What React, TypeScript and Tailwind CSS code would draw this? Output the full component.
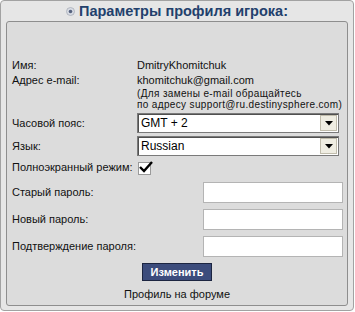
import React from "react";

const font = { fontFamily: '"Liberation Sans", Arial, sans-serif' };

function FakeSelect({ value }: { value: string }) {
  return (
    <div className="flex h-[20px] w-[202px] items-stretch border border-[#7a7a7a] bg-white shadow-[inset_1px_1px_0_#505050]">
      <div className="flex-1 pl-[3px] text-[12px] leading-[18px] text-black">{value}</div>
      <div className="m-[1px] flex w-[17px] items-center justify-center border border-[#c0bcac] bg-[#efede2]">
        <svg width="8" height="5" viewBox="0 0 8 5">
          <polygon points="0,0 8,0 4,4.5" fill="#000" />
        </svg>
      </div>
    </div>
  );
}

function PwRow({ label }: { label: string }) {
  return (
    <div className="flex h-[21px] items-center">
      <div className="flex-1 pl-[5px] text-[11px] text-[#111]">{label}</div>
      <div className="mr-[4px] h-[21px] w-[140px] border border-[#b4b4b4] bg-white" />
    </div>
  );
}

export default function App() {
  return (
    <div className="h-[312px] w-[355px] bg-white" style={font}>
      <div className="flex h-[311px] w-[354px] flex-col rounded-[4px] border border-[#a2a2a2] bg-[#e6e6e6]">
        <div className="flex h-[20px] items-center justify-center gap-[4px]">
          <svg width="9" height="9" viewBox="0 0 9 9" className="mt-[1px]">
            <circle cx="4.5" cy="4.5" r="4" fill="#d8dce4" stroke="#a8adb8" strokeWidth="0.8" />
            <circle cx="4.5" cy="4.5" r="1.8" fill="#56627e" />
          </svg>
          <span className="text-[14.5px] font-bold leading-[20px] text-[#22406c]">
            Параметры профиля игрока:
          </span>
        </div>
        <div className="mx-[5px] mb-[4px] flex flex-1 flex-col rounded-[3px] border border-[#8e8e8e] bg-[#dcdcdc] pt-[36px]">
          <div className="grid grid-cols-[130px_1fr] text-[11px] leading-[14px] text-[#111]">
            <div className="pl-[5px]">Имя:</div>
            <div>DmitryKhomitchuk</div>
            <div className="pl-[5px] pt-[1px]">Адрес e-mail:</div>
            <div className="pt-[1px]">
              <div>khomitchuk@gmail.com</div>
              <div className="mt-[1px] text-[10px] leading-[11px] tracking-[0.35px]">
                (Для замены e-mail обращайтесь
                <br />
                по адресу support@ru.destinysphere.com)
              </div>
            </div>
          </div>
          <div className="mt-[3px] flex flex-col gap-[3px]">
            <div className="grid grid-cols-[130px_1fr] items-center">
              <div className="pl-[5px] text-[11px] text-[#111]">Часовой пояс:</div>
              <FakeSelect value="GMT + 2" />
            </div>
            <div className="grid grid-cols-[130px_1fr] items-center">
              <div className="pl-[5px] text-[11px] text-[#111]">Язык:</div>
              <FakeSelect value="Russian" />
            </div>
            <div className="grid h-[16px] grid-cols-[130px_1fr] items-center">
              <div className="pl-[5px] text-[11px] text-[#111]">Полноэкранный режим:</div>
              <div className="relative ml-[1px] mt-[2px] h-[13px] w-[13px] border border-[#9a9a9a] bg-white">
                <svg width="15" height="13" viewBox="0 0 15 13" className="absolute left-[-1px] top-[-3px]">
                  <path d="M2 7 L6 11 L14 2" fill="none" stroke="#000" strokeWidth="2.4" />
                </svg>
              </div>
            </div>
          </div>
          <div className="mt-[7px] flex flex-col gap-[6px]">
            <PwRow label="Старый пароль:" />
            <PwRow label="Новый пароль:" />
            <PwRow label="Подтверждение пароля:" />
          </div>
          <div className="mt-[6px] flex justify-center">
            <button className="h-[18px] w-[70px] border border-[#1c2541] bg-[#3c4c7c] text-[11px] font-bold leading-[16px] text-white">
              Изменить
            </button>
          </div>
          <div className="mt-[6px] text-center text-[11px] leading-[14px] text-[#111]">
            Профиль на форуме
          </div>
        </div>
      </div>
    </div>
  );
}
